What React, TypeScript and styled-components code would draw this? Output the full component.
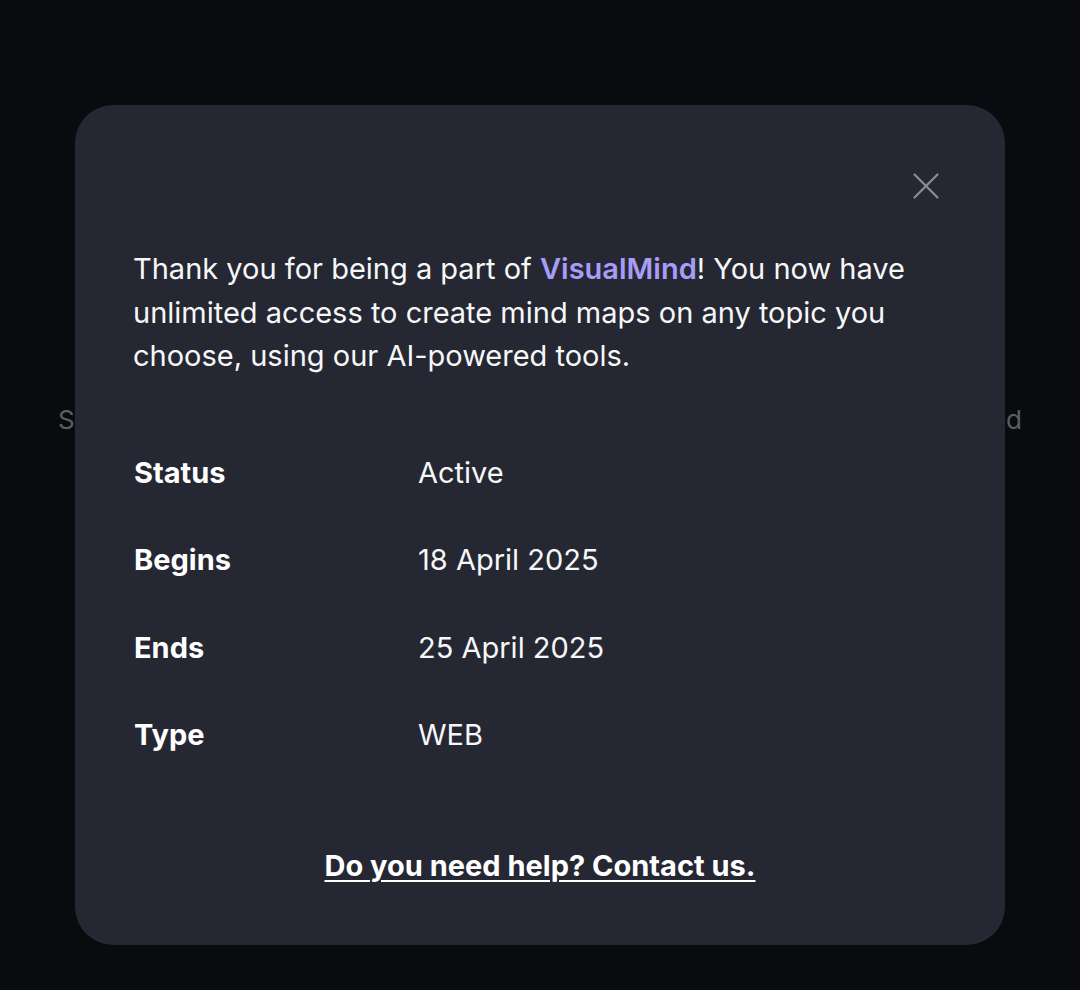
import styled, { createGlobalStyle } from 'styled-components';

const GlobalStyle = createGlobalStyle`
  * { box-sizing: border-box; }
  html, body {
    margin: 0;
    padding: 0;
    background: #0a0b0e;
    font-family: Inter, "Noto Sans", sans-serif;
  }
`;

const Page = styled.div`
  min-height: 100vh;
  background: #0a0b0e;
  padding-top: 398px;
`;

const BackdropLine = styled.div`
  display: flex;
  justify-content: space-between;
  padding: 0 58px 0 58px;
  font-size: 26px;
  line-height: 44px;
  color: #5b5e66;
`;

const Overlay = styled.div`
  position: fixed;
  inset: 0;
  display: flex;
  justify-content: center;
  align-items: flex-start;
  padding-top: 105px;
`;

const Dialog = styled.div`
  width: 930px;
  height: 840px;
  background: #252833;
  border-radius: 38px;
  padding: 68px 66px 0 58px;
  color: #f7f7f8;
  display: flex;
  flex-direction: column;
`;

const Header = styled.div`
  display: flex;
  justify-content: flex-end;
`;

const CloseButton = styled.button`
  width: 26px;
  height: 26px;
  padding: 0;
  border: none;
  background: none;
  color: #8a8e9a;
  cursor: pointer;
  display: flex;
  align-items: center;
  justify-content: center;
`;

const Intro = styled.p`
  margin: 48px 0 0;
  font-size: 29px;
  line-height: 43.5px;
  font-weight: 400;
  color: #f7f7f8;
`;

const Brand = styled.span`
  color: #a99cf6;
  font-weight: 600;
`;

const Details = styled.dl`
  margin: 51px 0 0;
  display: grid;
  grid-template-columns: 285px 1fr;
  grid-auto-rows: 87.5px;
  align-items: center;
`;

const Label = styled.dt`
  font-size: 29px;
  font-weight: 700;
  color: #ffffff;
  padding-left: 1px;
`;

const Value = styled.dd`
  margin: 0;
  font-size: 29px;
  font-weight: 400;
  color: #f7f7f8;
`;

const Footer = styled.div`
  margin-top: 69px;
  text-align: center;
  line-height: 36px;
  margin-left: 8px;
`;

const HelpLink = styled.a`
  font-size: 29px;
  font-weight: 700;
  color: #ffffff;
  text-decoration: underline;
  text-decoration-thickness: 2px;
  text-underline-offset: 4px;
`;

const rows = [
  { label: 'Status', value: 'Active' },
  { label: 'Begins', value: '18 April 2025' },
  { label: 'Ends', value: '25 April 2025' },
  { label: 'Type', value: 'WEB' },
];

export default function App() {
  return (
    <>
      <GlobalStyle />
      <Page>
        <BackdropLine>
          <span>Subscription</span>
          <span>Managed</span>
        </BackdropLine>
      </Page>
      <Overlay>
        <Dialog role="dialog">
          <Header>
            <CloseButton aria-label="Close">
              <svg width="26" height="26" viewBox="0 0 26 26" fill="none" stroke="currentColor" strokeWidth="2.2" strokeLinecap="round">
                <path d="M1.5 1.5 L24.5 24.5" />
                <path d="M24.5 1.5 L1.5 24.5" />
              </svg>
            </CloseButton>
          </Header>
          <Intro>
            Thank you for being a part of <Brand>VisualMind</Brand>! You now have unlimited access to create mind maps on any topic you choose, using our AI-powered tools.
          </Intro>
          <Details>
            {rows.map((r) => [
              <Label key={r.label}>{r.label}</Label>,
              <Value key={r.label + '-v'}>{r.value}</Value>,
            ])}
          </Details>
          <Footer>
            <HelpLink href="#">Do you need help? Contact us.</HelpLink>
          </Footer>
        </Dialog>
      </Overlay>
    </>
  );
}
